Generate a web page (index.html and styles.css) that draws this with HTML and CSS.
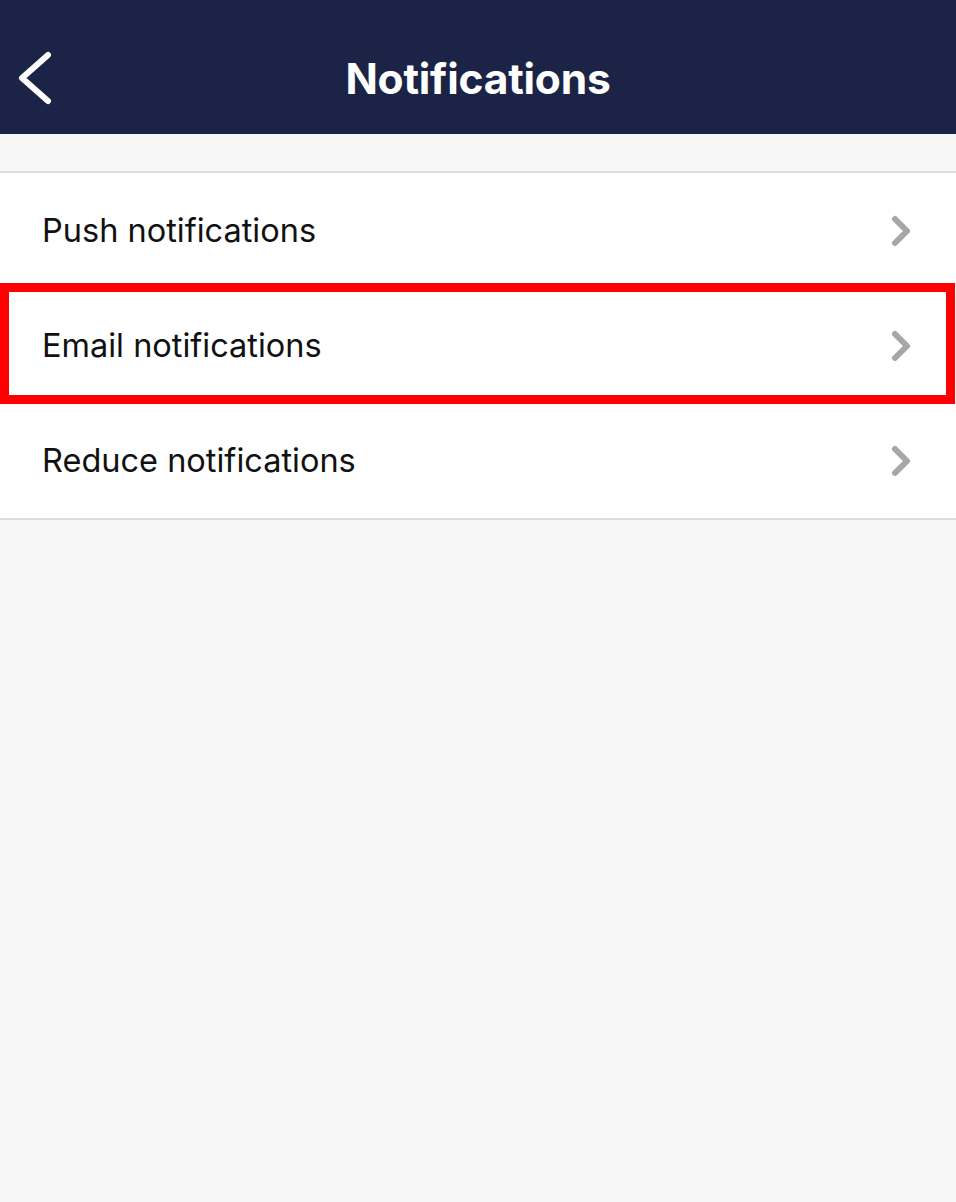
FILE: index.html
```html
<!DOCTYPE html>
<html lang="en">
<head>
<meta charset="utf-8">
<title>Notifications</title>
<link rel="stylesheet" href="styles.css">
</head>
<body>
<header class="topbar">
  <button class="back" aria-label="Back">
    <svg width="40" height="60" viewBox="0 0 40 60"><path d="M30 5 L4 28 L30 51" fill="none" stroke="#fff" stroke-width="6" stroke-linecap="round" stroke-linejoin="round"/></svg>
  </button>
  <h1 class="title">Notifications</h1>
</header>
<main class="content">
  <ul class="menu">
    <li class="row">
      <span class="label">Push notifications</span>
      <svg class="chev" width="24" height="34" viewBox="0 0 24 34"><path d="M5 5 L17 17 L5 29" fill="none" stroke="#a7a7a7" stroke-width="6" stroke-linecap="round" stroke-linejoin="round"/></svg>
    </li>
    <li class="row is-marked">
      <span class="label">Email notifications</span>
      <svg class="chev" width="24" height="34" viewBox="0 0 24 34"><path d="M5 5 L17 17 L5 29" fill="none" stroke="#a7a7a7" stroke-width="6" stroke-linecap="round" stroke-linejoin="round"/></svg>
      <span class="mark"></span>
    </li>
    <li class="row">
      <span class="label">Reduce notifications</span>
      <svg class="chev" width="24" height="34" viewBox="0 0 24 34"><path d="M5 5 L17 17 L5 29" fill="none" stroke="#a7a7a7" stroke-width="6" stroke-linecap="round" stroke-linejoin="round"/></svg>
    </li>
  </ul>
</main>
</body>
</html>
```
FILE: styles.css
```css
html, body {
  margin: 0;
  padding: 0;
  height: 100%;
}
body {
  background: #f6f6f6;
  font-family: "Inter", "Open Sans", "Liberation Sans", sans-serif;
}
.topbar {
  height: 134px;
  box-sizing: border-box;
  padding-top: 22px;
  background: #1b2446;
  display: flex;
  align-items: center;
  justify-content: center;
  position: relative;
}
.back {
  position: absolute;
  left: 18px;
  top: 50px;
  padding: 0;
  border: 0;
  background: none;
  display: block;
}
.back svg { display: block; }
.title {
  margin: 0;
  color: #fff;
  font-size: 42.5px;
  font-weight: 700;
  letter-spacing: -0.2px;
}
.content {
  padding-top: 37px;
}
.menu {
  list-style: none;
  margin: 0;
  padding: 0;
  background: #fff;
  border-top: 2px solid #dddddd;
  border-bottom: 2px solid #dddddd;
}
.row {
  position: relative;
  height: 115px;
  display: flex;
  align-items: center;
  justify-content: space-between;
  padding: 0 42px 0 42px;
}
.label {
  font-size: 32.5px;
  color: #111;
}
.chev {
  display: block;
}
.mark {
  position: absolute;
  top: -5px;
  bottom: -1px;
  left: 0;
  right: 1px;
  border: 9px solid #fe0000;
  pointer-events: none;
}
```
